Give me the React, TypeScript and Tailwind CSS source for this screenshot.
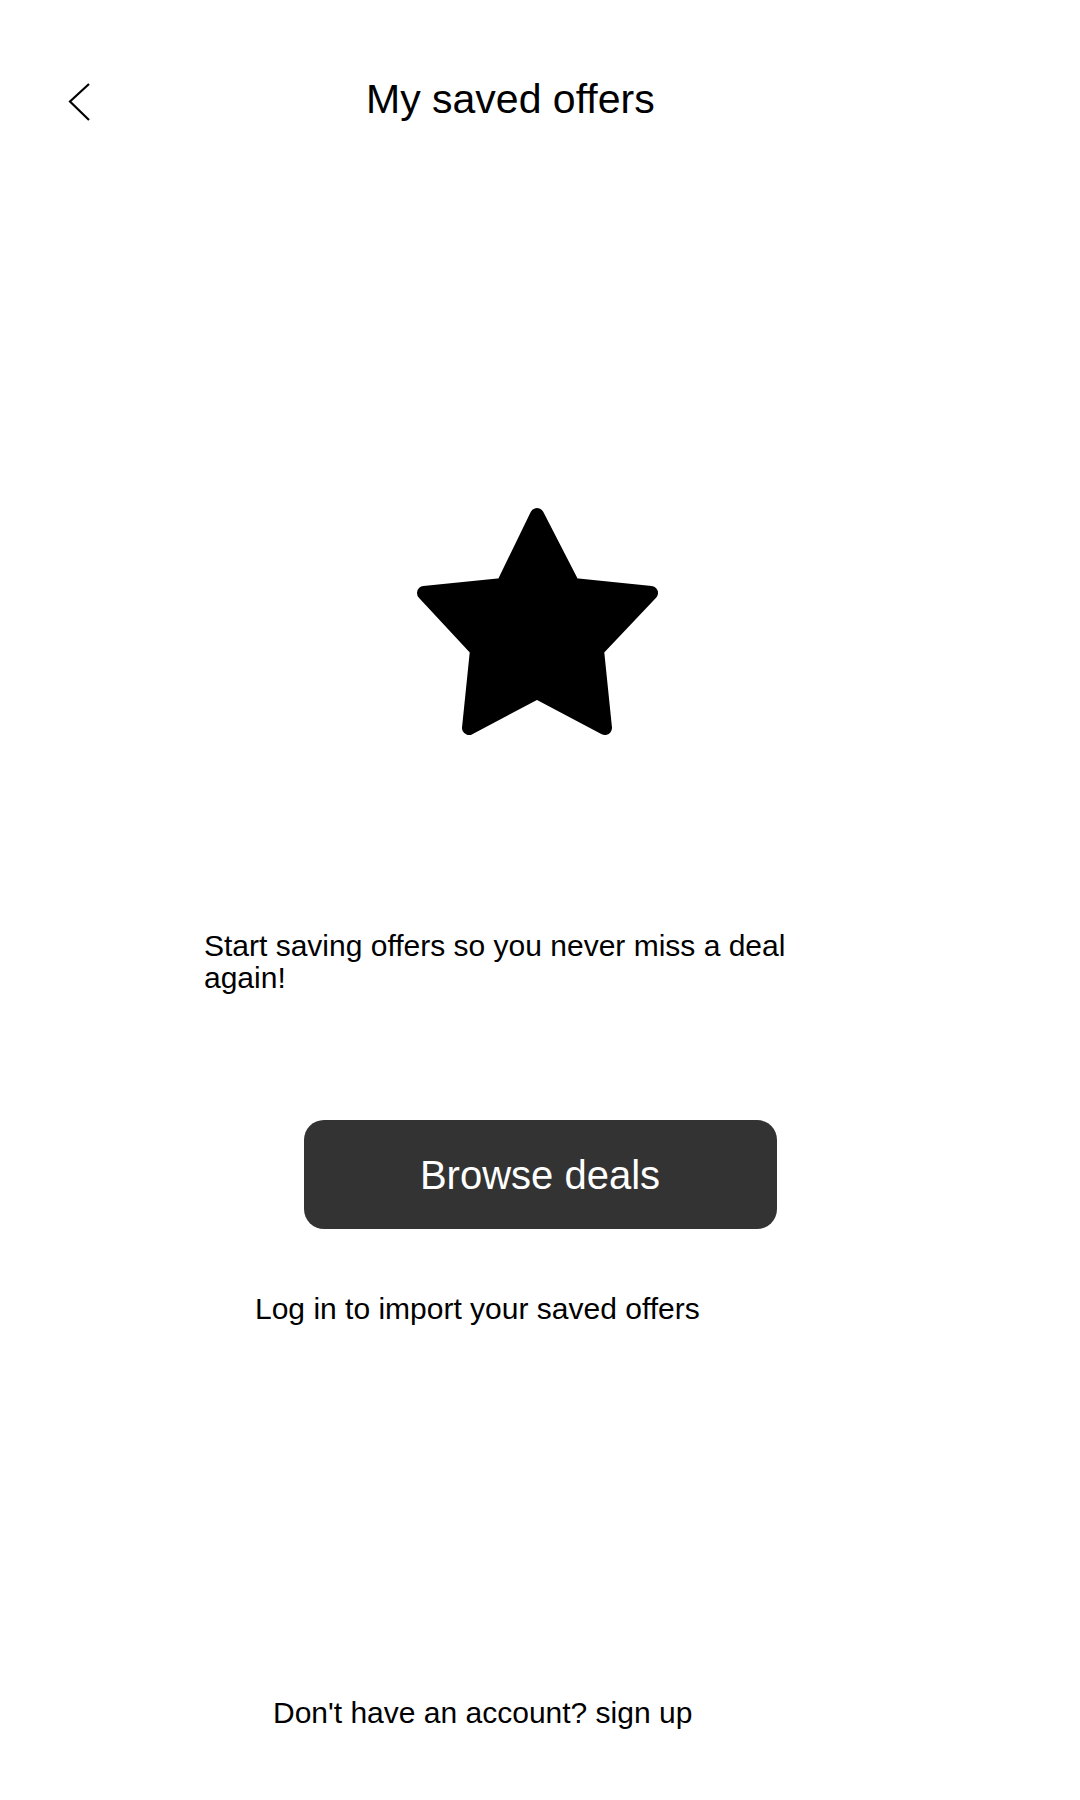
export default function App() {
  return (
    <div className="min-h-[1800px] w-[1080px] bg-white text-black font-['Liberation_Sans',Arial,sans-serif]">
      {/* Header */}
      <header className="flex items-center pt-[75px] pl-[68px] h-[123px]">
        <button className="w-[22px] h-[38px] mt-[6px] flex items-center justify-center">
          <svg width="22" height="38" viewBox="0 0 22 38" fill="none">
            <path d="M21 1 L2 18.5 L21 37" stroke="#000" strokeWidth="2.2" />
          </svg>
        </button>
        <h1 className="ml-[276px] text-[41px] leading-[48px] font-normal">My saved offers</h1>
      </header>

      {/* Empty state */}
      <div className="flex justify-center mt-[377px]">
        <svg width="260" height="250" viewBox="0 0 260 250">
          <polygon
            points="127,15 163,85 241,93 187,150 195,228 127,192 59,228 67,150 14,93 93,85"
            fill="#000"
            stroke="#000"
            strokeWidth="14"
            strokeLinejoin="round"
          />
        </svg>
      </div>

      <p className="mt-[180px] ml-[204px] w-[600px] text-[30px] leading-[32px]">
        Start saving offers so you never miss a deal again!
      </p>

      <div className="flex justify-center mt-[126px]">
        <button className="w-[473px] h-[109px] rounded-[20px] bg-[#333333] text-white text-[40px] leading-none">
          Browse deals
        </button>
      </div>

      <p className="mt-[64px] ml-[255px] text-[30px] leading-[32px]">Log in to import your saved offers</p>

      <p className="mt-[372px] ml-[273px] text-[30px] leading-[32px]">Don't have an account? sign up</p>
    </div>
  );
}
